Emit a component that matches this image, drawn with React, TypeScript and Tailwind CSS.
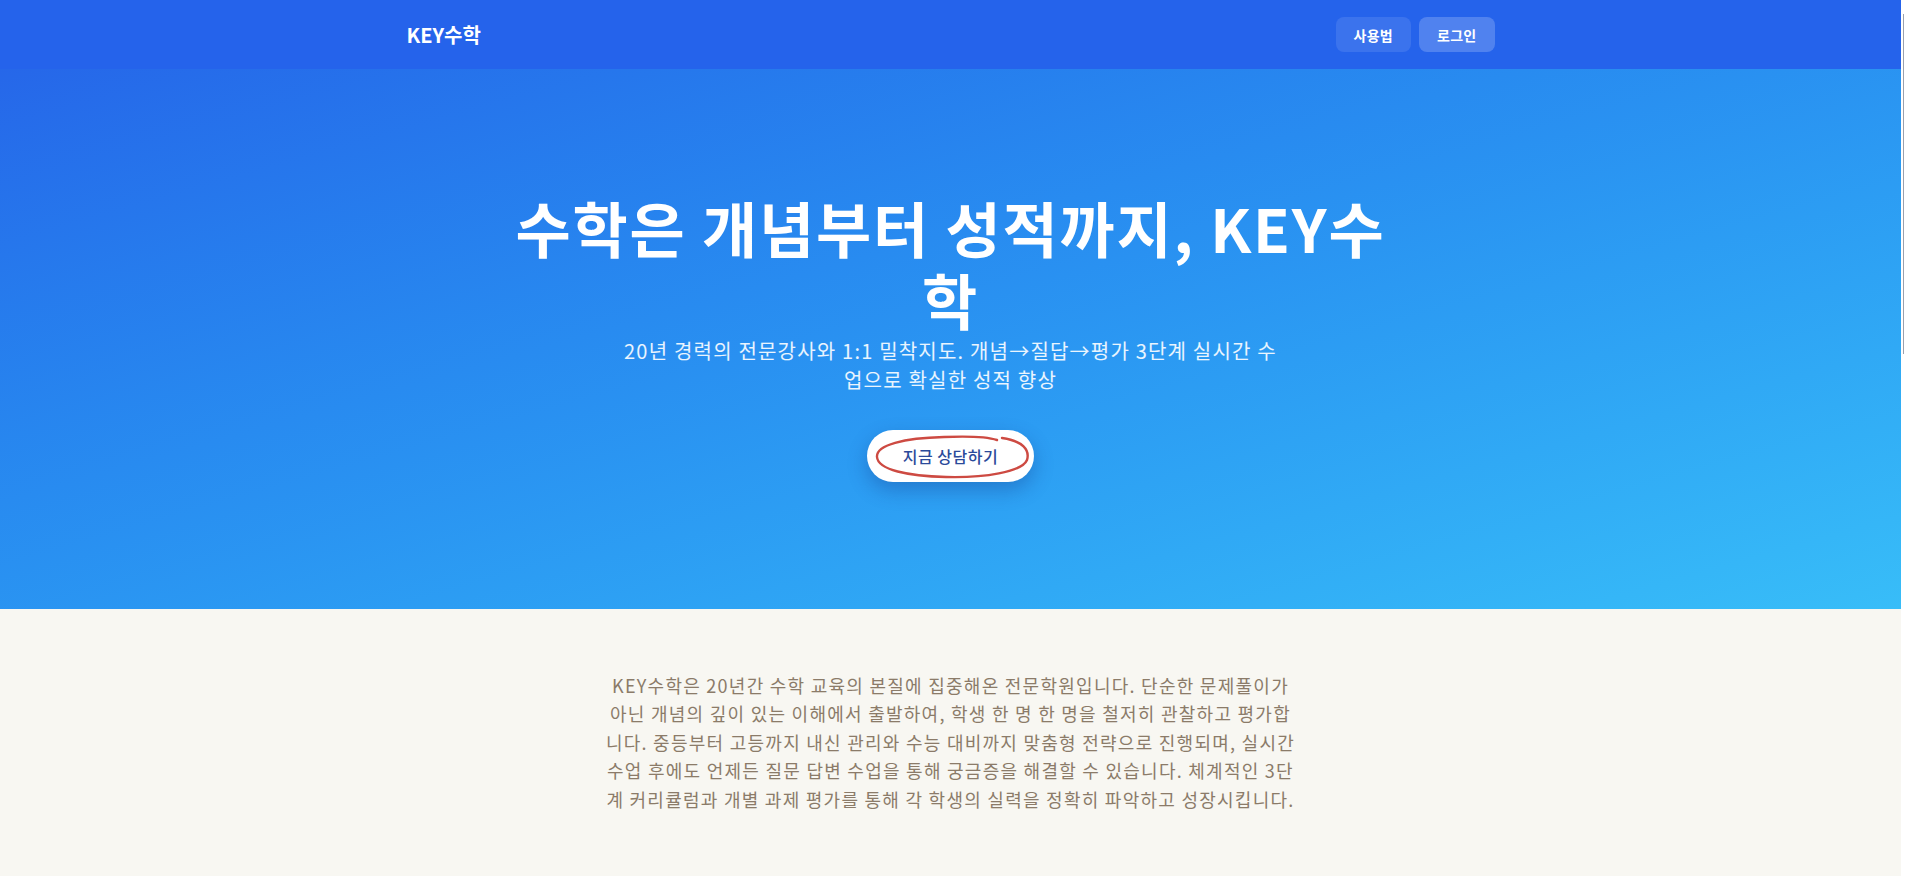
const intro = [
  "KEY수학은 20년간 수학 교육의 본질에 집중해온 전문학원입니다. 단순한 문제풀이가",
  "아닌 개념의 깊이 있는 이해에서 출발하여, 학생 한 명 한 명을 철저히 관찰하고 평가합",
  "니다. 중등부터 고등까지 내신 관리와 수능 대비까지 맞춤형 전략으로 진행되며, 실시간",
  "수업 후에도 언제든 질문 답변 수업을 통해 궁금증을 해결할 수 있습니다. 체계적인 3단",
  "계 커리큘럼과 개별 과제 평가를 통해 각 학생의 실력을 정확히 파악하고 성장시킵니다.",
];

export default function App() {
  return (
    <div className="flex min-h-screen bg-white font-['Malgun_Gothic','Noto_Sans_CJK_KR',sans-serif]">
      <div className="flex-1 min-w-0 bg-[#f8f7f2]">
        {/* Top bar */}
        <header className="bg-[#2563eb] shadow-sm">
          <div className="max-w-6xl mx-auto px-8 h-[69px] flex items-center justify-between">
            <a className="text-white font-bold text-xl">KEY수학</a>
            <nav className="flex items-center gap-2">
              <button className="h-[35px] px-[18px] rounded-lg bg-white/10 text-white text-sm font-bold tracking-[0.02em]">
                사용법
              </button>
              <button className="h-[35px] px-[18px] rounded-lg bg-white/20 text-white text-sm font-bold tracking-[0.02em]">
                로그인
              </button>
            </nav>
          </div>
        </header>

        {/* Hero */}
        <section className="bg-gradient-to-br from-[#2667e9] to-[#38bdf8] h-[540px] flex flex-col items-center pt-[122px] px-8 text-center">
          <h1 className="max-w-4xl text-white font-bold text-6xl leading-[72px] tracking-[0.03em]">
            수학은 개념부터 성적까지, KEY수
            <br />
            학
          </h1>
          <p className="mt-[1px] max-w-2xl text-white/90 text-xl leading-[29px] tracking-[0.06em]">
            20년 경력의 전문강사와 1:1 밀착지도. 개념→질답→평가 3단계 실시간 수
            <br />
            업으로 확실한 성적 향상
          </p>
          <button className="relative mt-9 h-[52px] px-9 rounded-full bg-white text-[#2b4a9a] text-base font-medium tracking-[0.03em] shadow-[0_8px_20px_rgba(15,40,120,0.3)]">
            지금 상담하기
            <svg
              className="absolute left-[7px] top-[3px] pointer-events-none"
              width="158"
              height="47"
              viewBox="0 0 158 47"
              fill="none"
            >
              <path
                d="M128 5 C 149 8, 156 17, 153 27 C 148 39, 110 45, 72 44 C 34 43, 4 37, 3 24 C 2 12, 30 5, 70 4 C 95 3, 114 4, 123 7"
                stroke="#cd4a42"
                strokeWidth="2.4"
                strokeLinecap="round"
              />
            </svg>
          </button>
        </section>

        {/* About */}
        <section className="pt-[62px] pb-16">
          <p className="max-w-[820px] mx-auto text-center text-[#8b7b69] text-[18px] leading-[28.4px] tracking-[0.07em] whitespace-nowrap">
            {intro.map((line, i) => (
              <span key={i} className="block">
                {line}
              </span>
            ))}
          </p>
        </section>
      </div>

      {/* scrollbar gutter */}
      <div className="w-[4px] shrink-0 bg-white pt-[14px]">
        <div className="ml-[2px] w-[1px] h-[340px] bg-gray-400" />
      </div>
    </div>
  );
}
